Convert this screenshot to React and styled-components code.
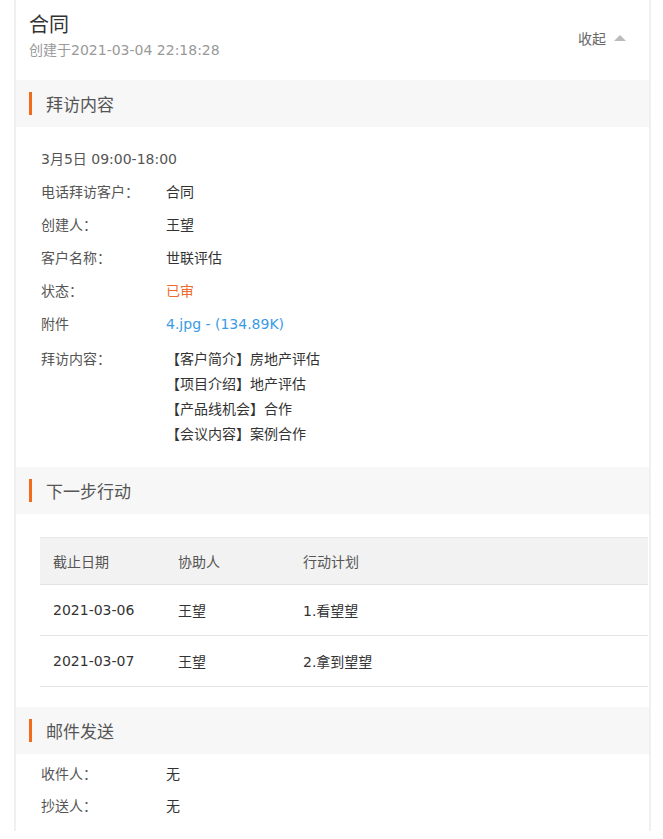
import React from 'react';
import styled, { createGlobalStyle } from 'styled-components';

const GlobalStyle = createGlobalStyle`
  body {
    margin: 0;
    background: #fff;
    font-family: "DejaVu Sans", "Noto Sans CJK SC", sans-serif;
    color: #333;
  }
`;

const Card = styled.div`
  box-sizing: border-box;
  width: 637px;
  margin-left: 14px;
  border-left: 2px solid #f0f0f0;
  border-right: 2px solid #f0f0f0;
  padding-bottom: 15px;
`;

const Top = styled.div`
  display: flex;
  justify-content: space-between;
  align-items: center;
  padding: 12px 23px 19px 13px;
`;

const Title = styled.div`
  font-size: 20px;
  line-height: 26px;
  color: #333;
`;

const Sub = styled.div`
  font-size: 14px;
  line-height: 22px;
  color: #999;
  margin-top: 1px;
`;

const Toggle = styled.div`
  display: flex;
  align-items: center;
  gap: 8px;
  font-size: 14px;
  color: #666;
  margin-top: 2px;
`;

const Arrow = styled.span`
  width: 0;
  height: 0;
  border-left: 6px solid transparent;
  border-right: 6px solid transparent;
  border-bottom: 6px solid #bbb;
`;

const SectionHead = styled.div`
  display: flex;
  align-items: center;
  gap: 14px;
  height: 47px;
  padding-left: 13px;
  background: #f7f7f7;
  font-size: 17px;
  color: #555;
  &::before {
    content: '';
    width: 3px;
    height: 23px;
    background: #f26b1d;
  }
`;

const Body = styled.div`
  display: flex;
  flex-direction: column;
  gap: ${(p) => p.$gap || 13}px;
  padding: ${(p) => p.$pad || '22px 0 20px 25px'};
`;

const Row = styled.div`
  display: flex;
  font-size: 14px;
  line-height: ${(p) => p.$lh || 20}px;
`;

const Label = styled.div`
  width: 125px;
  flex-shrink: 0;
  color: #555;
`;

const Value = styled.div`
  color: ${(p) => p.$color || '#333'};
`;

const Plain = styled.div`
  font-size: 14px;
  line-height: 20px;
  color: #555;
`;

const TableWrap = styled.div`
  padding: 23px 1px 20px 24px;
`;

const Table = styled.table`
  width: 100%;
  border-collapse: collapse;
  font-size: 14px;
  color: #333;
`;

const Th = styled.th`
  text-align: left;
  font-weight: normal;
  color: #555;
  background: #f2f2f2;
  height: 46px;
  padding: 0 0 0 13px;
  width: ${(p) => p.$w || 'auto'};
  border-top: 1px solid #e8e8e8;
  border-bottom: 1px solid #e3e3e3;
`;

const Td = styled.td`
  height: 50px;
  padding: 0 0 0 13px;
  border-bottom: 1px solid #e3e3e3;
`;

const visit = [
  ['电话拜访客户：', '合同'],
  ['创建人：', '王望'],
  ['客户名称：', '世联评估'],
  ['状态：', '已审', '#ef6a2f'],
  ['附件', '4.jpg - (134.89K)', '#3a9be6'],
];

const notes = [
  '【客户简介】房地产评估',
  '【项目介绍】地产评估',
  '【产品线机会】合作',
  '【会议内容】案例合作',
];

const plans = [
  ['2021-03-06', '王望', '1.看望望'],
  ['2021-03-07', '王望', '2.拿到望望'],
];

export default function App() {
  return (
    <>
      <GlobalStyle />
      <Card>
        <Top>
          <div>
            <Title>合同</Title>
            <Sub>创建于2021-03-04 22:18:28</Sub>
          </div>
          <Toggle>
            收起 <Arrow />
          </Toggle>
        </Top>

        <SectionHead>拜访内容</SectionHead>
        <Body>
          <Plain>3月5日 09:00-18:00</Plain>
          {visit.map(([l, v, c]) => (
            <Row key={l}>
              <Label>{l}</Label>
              <Value $color={c}>{v}</Value>
            </Row>
          ))}
          <Row $lh={25}>
            <Label>拜访内容：</Label>
            <Value>
              {notes.map((n) => (
                <div key={n}>{n}</div>
              ))}
            </Value>
          </Row>
        </Body>

        <SectionHead>下一步行动</SectionHead>
        <TableWrap>
          <Table>
            <thead>
              <tr>
                <Th $w="112px">截止日期</Th>
                <Th $w="112px">协助人</Th>
                <Th>行动计划</Th>
              </tr>
            </thead>
            <tbody>
              {plans.map((r) => (
                <tr key={r[0]}>
                  {r.map((c) => (
                    <Td key={c}>{c}</Td>
                  ))}
                </tr>
              ))}
            </tbody>
          </Table>
        </TableWrap>

        <SectionHead>邮件发送</SectionHead>
        <Body $gap={12} $pad="10px 0 0 25px">
          <Row>
            <Label>收件人：</Label>
            <Value>无</Value>
          </Row>
          <Row>
            <Label>抄送人：</Label>
            <Value>无</Value>
          </Row>
        </Body>
      </Card>
    </>
  );
}
